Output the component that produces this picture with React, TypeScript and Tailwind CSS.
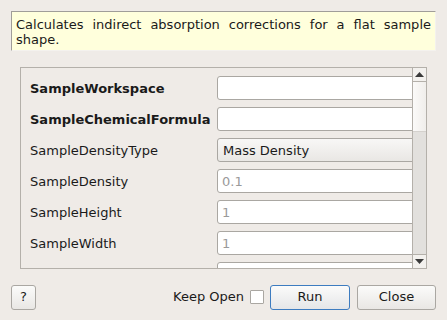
import React from 'react';

interface Prop {
  name: string;
  bold?: boolean;
  kind: 'text' | 'combo';
  value?: string;
  placeholder?: string;
}

const PROPS: Prop[] = [
  { name: 'SampleWorkspace', bold: true, kind: 'text' },
  { name: 'SampleChemicalFormula', bold: true, kind: 'text' },
  { name: 'SampleDensityType', kind: 'combo', value: 'Mass Density' },
  { name: 'SampleDensity', kind: 'text', placeholder: '0.1' },
  { name: 'SampleHeight', kind: 'text', placeholder: '1' },
  { name: 'SampleWidth', kind: 'text', placeholder: '1' },
  // next row is scrolled out of view, only the top of its box shows
  { name: '', kind: 'text' },
];

export default function App() {
  return (
    <div
      className="w-[447px] h-[320px] bg-[#efebe7] text-[13px] text-[#1a1a1a] flex flex-col overflow-hidden"
      style={{ fontFamily: '"DejaVu Sans", sans-serif' }}
    >
      {/* Description */}
      <div className="mx-[11px] mt-[11px] h-[40px] bg-[#ffffdc] border-t border-l border-[#a09d99] border-r-[#f4f2ee] border-b-[#f4f2ee] border-r border-b px-[4px] pt-[5px] leading-[15px] text-justify">
        Calculates indirect absorption corrections for a flat sample shape.
      </div>

      {/* Property scroll area */}
      <div className="mx-[20px] mt-[16px] h-[202px] border border-[#b4b0aa] flex">
        <div className="flex-1 overflow-hidden">
          <div className="w-[420px] pl-[9px] pt-[8px] grid grid-cols-[187px_1fr] gap-y-[7px]">
            {PROPS.map((p, i) => (
              <React.Fragment key={i}>
                <div className={`h-[24px] flex items-center pt-[1px] ${p.bold ? 'font-bold' : ''}`}>{p.name}</div>
                {p.kind === 'combo' ? (
                  <div className="h-[24px] rounded-[3px] border border-[#aaa7a2] bg-gradient-to-b from-[#f8f7f6] to-[#e9e7e4] flex items-center px-[5px] pt-[1px]">
                    {p.value}
                  </div>
                ) : (
                  <div className="h-[24px] rounded-[3px] border border-[#aaa7a2] bg-white flex items-center px-[4px] pt-[1px] text-[#9a9a9a]">
                    {p.placeholder}
                  </div>
                )}
              </React.Fragment>
            ))}
          </div>
        </div>

        {/* Scrollbar */}
        <div className="w-[14px] border-l border-[#b4b0aa] flex flex-col bg-[#e2e0dd]">
          <div className="h-[14px] bg-[#f3f1ee] border-b border-[#b4b0aa] flex items-center justify-center">
            <svg width="9" height="5" viewBox="0 0 9 5">
              <polygon points="4.5,0 9,5 0,5" fill="#3a3a3a" />
            </svg>
          </div>
          <div className="h-[50px] bg-gradient-to-r from-[#fbfaf9] to-[#f0eeeb] border-b border-[#d4d1cd]" />
          <div className="flex-1" />
          <div className="h-[14px] bg-[#f3f1ee] border-t border-[#b4b0aa] flex items-center justify-center">
            <svg width="9" height="5" viewBox="0 0 9 5">
              <polygon points="0,0 9,0 4.5,5" fill="#3a3a3a" />
            </svg>
          </div>
        </div>
      </div>

      {/* Buttons */}
      <div className="mx-[11px] mt-[16px] h-[24px] flex items-center">
        <button className="w-[25px] h-[25px] rounded-[3px] border border-[#aaa7a2] bg-gradient-to-b from-[#fbfbfa] to-[#e9e7e4] flex items-center justify-center">
          ?
        </button>
        <div className="flex-1" />
        <span>Keep Open</span>
        <div className="ml-[6px] w-[14px] h-[14px] border border-[#aaa7a2] bg-white rounded-[1px]" />
        <button className="ml-[6px] w-[80px] h-[25px] rounded-[3px] border border-[#3d7cc0] bg-gradient-to-b from-[#fbfbfa] to-[#e5e6e8] flex items-center justify-center">
          Run
        </button>
        <button className="ml-[7px] w-[79px] h-[25px] rounded-[3px] border border-[#aaa7a2] bg-gradient-to-b from-[#fbfbfa] to-[#e9e7e4] flex items-center justify-center">
          Close
        </button>
      </div>
    </div>
  );
}
